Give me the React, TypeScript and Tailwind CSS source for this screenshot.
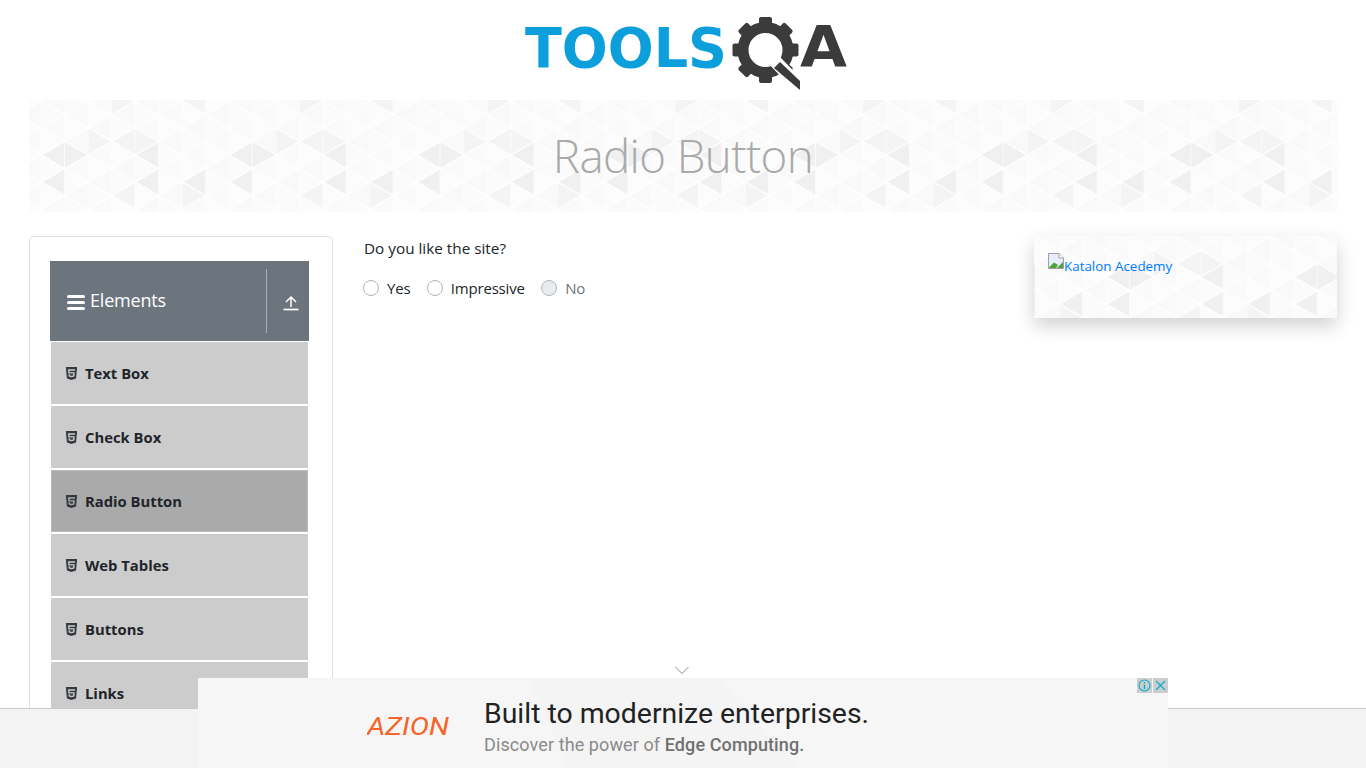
import { FaHtml5 } from "react-icons/fa";

const COL_W = 23.47;
const TILE_W = COL_W * 8;
const TILE_H = 162;

// shaded triangles of the tile, as "column:centre:direction"
const DARK = ["1:55:L", "1:55:R", "5:55:L", "1:82:L", "5:82:L", "7:82:L"];
const MID = ["4:95.5:L", "6:95.5:R", "2:41.5:R", "4:41.5:L", "4:41.5:R", "3:1:R", "7:1:L"];
const BASE = ["#fbfbfb", "#fafafa", "#fcfcfc", "#f9f9f9"];

function triangleFill(col: number, centre: number, dir: string) {
  const c = ((col % 8) + 8) % 8;
  const y = ((centre % TILE_H) + TILE_H) % TILE_H;
  const key = `${c}:${y}:${dir}`;
  if (DARK.includes(key)) return "#f0f0f0";
  if (MID.includes(key)) return "#f4f4f4";
  return BASE[(c * 5 + Math.round(y * 2) * 3 + (dir === "L" ? 0 : 1)) % 4];
}

function Triangles() {
  const items = [];
  for (let col = -1; col <= 9; col++) {
    const x = 12.5 + col * COL_W;
    const first = col % 2 === 0 ? 41.5 - 54 : 55 - 54;
    for (let c = first; c < TILE_H + 27; c += 27) {
      for (const dir of ["L", "R"]) {
        const apex = dir === "L" ? x - COL_W : x + COL_W;
        items.push(
          <polygon
            key={`${col}-${c}-${dir}`}
            points={`${x},${c - 13.5} ${x},${c + 13.5} ${apex},${c}`}
            fill={triangleFill(col, c, dir)}
            stroke={dir === "L" ? "#ffffff" : "none"}
            strokeWidth="1.4"
          />
        );
      }
    }
  }
  return <>{items}</>;
}

function PatternBg({ id, dx = 0, dy = 0 }: { id: string; dx?: number; dy?: number }) {
  return (
    <svg className="absolute inset-0 h-full w-full" aria-hidden="true">
      <defs>
        <pattern
          id={id}
          width={TILE_W}
          height={TILE_H}
          patternUnits="userSpaceOnUse"
          patternTransform={`translate(${dx} ${dy})`}
        >
          <rect width={TILE_W} height={TILE_H} fill="#ffffff" />
          <Triangles />
        </pattern>
      </defs>
      <rect width="100%" height="100%" fill={`url(#${id})`} />
    </svg>
  );
}

function Logo() {
  const teeth = [0, 45, 90, 135, 180, 225, 270, 315];
  return (
    <svg width="330" height="100" viewBox="520 0 330 100" aria-label="Tools QA">
      <text
        x="524"
        y="67"
        fontFamily="'DejaVu Sans', sans-serif"
        fontWeight="700"
        fontSize="56"
        fill="#0d9fdc"
        textLength="202"
        lengthAdjust="spacingAndGlyphs"
      >
        TOOLS
      </text>
      <g fill="#3b3b3b">
        {teeth.map((a) => (
          <rect key={a} x="758" y="17" width="13" height="12" rx="2" transform={`rotate(${a} 764.5 50)`} />
        ))}
      </g>
      <circle cx="764.5" cy="50" r="22.5" fill="none" stroke="#3b3b3b" strokeWidth="11" />
      <line x1="771" y1="58" x2="802" y2="90" stroke="#ffffff" strokeWidth="13" />
      <polygon points="779,62 799,81 799,90 773,68" fill="#3b3b3b" />
      <text
        x="799"
        y="67"
        fontFamily="'DejaVu Sans', sans-serif"
        fontWeight="700"
        fontSize="57"
        fill="#3b3b3b"
        textLength="47"
        lengthAdjust="spacingAndGlyphs"
      >
        A
      </text>
    </svg>
  );
}

const MENU = ["Text Box", "Check Box", "Radio Button", "Web Tables", "Buttons", "Links"];

function Sidebar() {
  return (
    <aside className="h-[600px] w-[304px] shrink-0 rounded-[5px] border border-[#dfdfdf] pt-6 pr-[23px] pl-5">
      <div className="flex h-20 items-center bg-[#6c757d] text-white">
        <div className="flex flex-1 items-center pl-[17px]">
          <span className="mt-[2px] flex h-[15px] w-[18px] flex-col justify-between">
            <span className="h-[3px] rounded-sm bg-white" />
            <span className="h-[3px] rounded-sm bg-white" />
            <span className="h-[3px] rounded-sm bg-white" />
          </span>
          <span className="mb-[3px] ml-[5px] text-[18px] leading-none tracking-[-0.2px]">Elements</span>
        </div>
        <div className="flex h-16 w-[43px] items-center justify-center border-l border-[#a9aeb3] pt-1 pl-[6px]">
          <svg width="16" height="16" viewBox="0 0 16 16" fill="none" stroke="#ffffff" strokeWidth="1.5">
            <path d="M8 12V2.5M3 7l5-5 5 5" />
            <path d="M0.5 14.5h15" strokeWidth="1.7" />
          </svg>
        </div>
      </div>
      <ul className="mx-px mt-px flex flex-col gap-0.5">
        {MENU.map((label) => (
          <li
            key={label}
            className={
              label === "Radio Button"
                ? "flex h-[62px] items-center border border-[#b8bcc0] bg-[#aaaaaa] pl-[12px] text-[#212529]"
                : "flex h-[62px] items-center bg-[#cccccc] pl-[13px] text-[#212529]"
            }
          >
            <FaHtml5 className="h-[15px] w-[15px] text-[#343a40]" />
            <span className="mt-px ml-[6px] text-[14.8px] font-bold">{label}</span>
          </li>
        ))}
      </ul>
    </aside>
  );
}

function RadioOption({ label, disabled = false }: { label: string; disabled?: boolean }) {
  return (
    <label className="flex items-center">
      <input
        type="radio"
        name="like"
        disabled={disabled}
        className={
          disabled
            ? "h-4 w-4 appearance-none rounded-full border border-[#adb5bd] bg-[#e9ecef]"
            : "h-4 w-4 appearance-none rounded-full border border-[#adb5bd] bg-white"
        }
      />
      <span className={disabled ? "ml-2 text-[#6c757d]" : "ml-2 text-[#212529]"}>{label}</span>
    </label>
  );
}

function BrokenImage() {
  return (
    <svg width="16" height="16" viewBox="0 0 16 16" className="shrink-0">
      <path d="M0.5 0.5H11L15.5 5V15.5H0.5Z" fill="#e8eefb" stroke="#a0a0a0" />
      <path d="M11 0.5V5H15.5" fill="#ffffff" stroke="#a0a0a0" />
      <path d="M1 14.5L6 9.5L10 12L8 15H1Z" fill="#4aa43a" />
      <path d="M9 15L15 9V15Z" fill="#4aa43a" />
    </svg>
  );
}

function BottomAd() {
  return (
    <div className="absolute inset-x-0 bottom-0 h-[60px] border-t border-[#c8c8c8] bg-[#f3f3f3]">
      <div className="absolute bottom-0 left-[198px] h-[90px] w-[970px] overflow-hidden bg-[#f6f6f6]">
        <svg className="absolute inset-0 h-full w-full" aria-hidden="true">
          <polygon points="330,0 520,0 600,90 370,90" fill="#f4f4f4" />
        </svg>
        <div className="absolute top-[34px] left-[169px]">
          <svg width="110" height="32" viewBox="0 0 110 32">
            <text
              x="0"
              y="23"
              fontFamily="Roboto, sans-serif"
              fontStyle="italic"
              fontWeight="400"
              fontSize="26"
              fill="#f3652b"
              textLength="82"
              lengthAdjust="spacingAndGlyphs"
            >
              AZION
            </text>
          </svg>
        </div>
        <div className="absolute top-[19px] left-[286px] font-['Roboto',sans-serif]">
          <p className="text-[28.4px] leading-[33px] whitespace-nowrap text-[#222222]">Built to modernize enterprises.</p>
          <p className="mt-[5px] text-[18px] leading-[20px] tracking-[0.1px] whitespace-nowrap text-[#8a8a8a]">
            Discover the power of <span className="font-medium text-[#707070]">Edge Computing.</span>
          </p>
        </div>
        <div className="absolute top-0 right-0 flex gap-px">
          <span className="flex h-[15px] w-[15px] items-center justify-center bg-[#cdcdcd]">
            <svg width="13" height="13" viewBox="0 0 13 13" fill="none" stroke="#00aecd" strokeWidth="1.1">
              <circle cx="6.5" cy="6.5" r="5.5" />
              <path d="M6.5 5.5V10M6.5 3V4.2" strokeWidth="1.4" />
            </svg>
          </span>
          <span className="flex h-[15px] w-[15px] items-center justify-center bg-[#cdcdcd]">
            <svg width="11" height="11" viewBox="0 0 11 11" fill="none" stroke="#00aecd" strokeWidth="1.2">
              <path d="M1 1L10 10M10 1L1 10" />
            </svg>
          </span>
        </div>
      </div>
    </div>
  );
}

export default function App() {
  return (
    <div className="relative h-screen overflow-hidden bg-white font-['Open_Sans',sans-serif] text-base text-[#212529]">
      <header className="flex h-[100px] justify-center pl-[5px]">
        <Logo />
      </header>

      <div className="relative mx-[29px] flex h-[112px] items-center justify-center overflow-hidden">
        <PatternBg id="banner-tiles" />
        <h1 className="relative -mt-[2px] text-[45.7px] font-light tracking-[-0.6px] text-[#a9a9a9]">Radio Button</h1>
      </div>

      <div className="mx-[29px] mt-6 flex">
        <Sidebar />

        <main className="flex-1 pl-[31px]">
          <p className="text-[15.3px] leading-6">Do you like the site?</p>
          <div className="mt-4 -ml-px flex gap-[16.5px] text-[15px] leading-6 tracking-[-0.2px]">
            <RadioOption label="Yes" />
            <RadioOption label="Impressive" />
            <RadioOption label="No" disabled />
          </div>
        </main>

        <div className="relative h-[82px] w-[303px] shrink-0 shadow-[0_8px_18px_rgba(0,0,0,0.18)]">
          <PatternBg id="ad-tiles" dx={60} dy={-14} />
          <a href="#" className="relative flex items-start pt-[17px] pl-[14px] text-[13.4px] leading-[22px] text-[#007bff]">
            <BrokenImage />
            <span className="mt-[2px]">Katalon Acedemy</span>
          </a>
        </div>
      </div>

      <svg className="absolute top-[666px] left-[675px]" width="14" height="9" viewBox="0 0 14 9" fill="none" stroke="#8c8c8c">
        <path d="M0.5 1L7 7.5L13.5 1" />
      </svg>

      <BottomAd />
    </div>
  );
}
